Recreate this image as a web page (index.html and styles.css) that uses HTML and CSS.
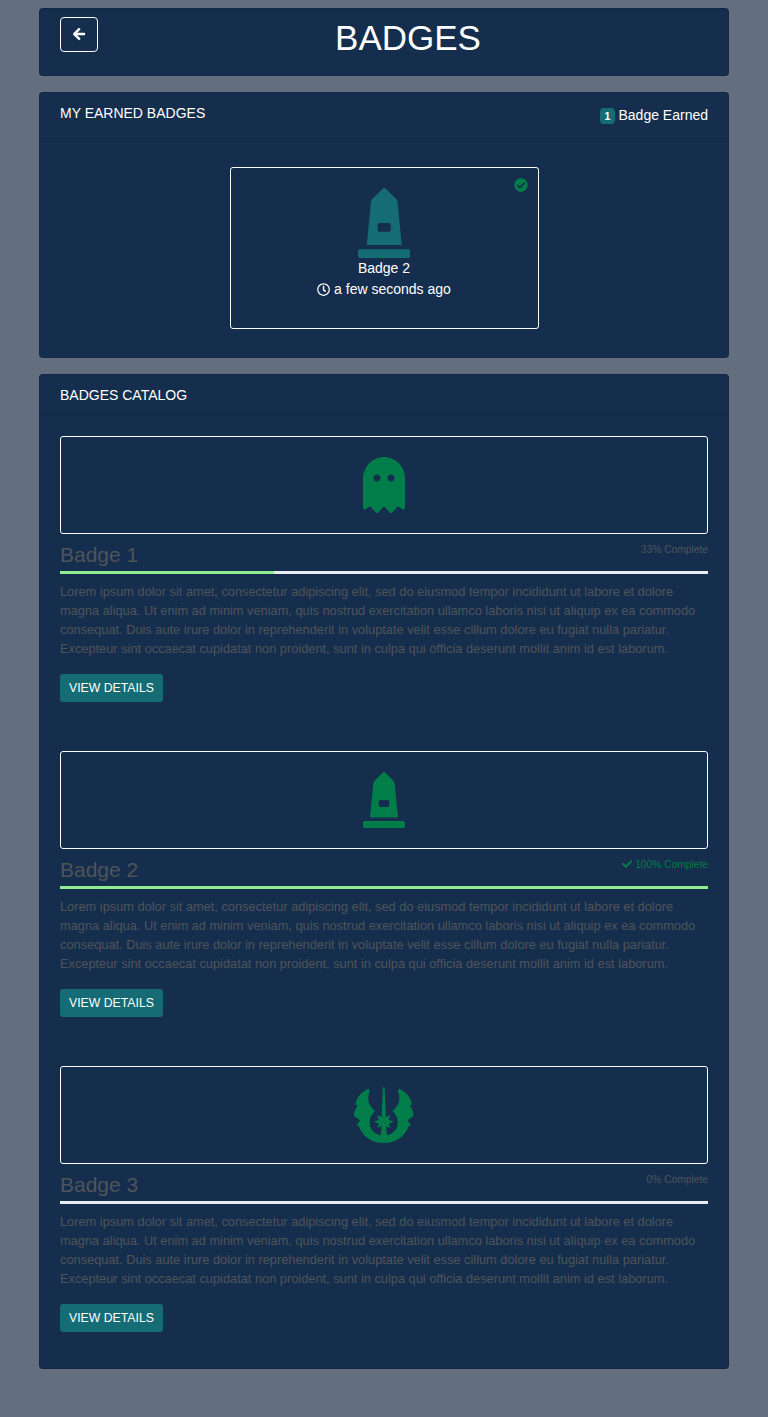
FILE: index.html
```html
<!DOCTYPE html>
<html lang="en">
<head>
<meta charset="utf-8">
<title>Badges</title>
<link rel="stylesheet" href="styles.css">
</head>
<body>
<svg class="sprite" aria-hidden="true">
  <symbol id="arrow-left" viewBox="0 0 448 512"><path d="M257.5 445.1l-22.2 22.2c-9.4 9.4-24.6 9.4-33.9 0L7 273c-9.4-9.4-9.4-24.6 0-33.9L201.4 44.7c9.4-9.4 24.6-9.4 33.9 0l22.2 22.2c9.5 9.5 9.3 25-.4 34.3L136.6 216H424c13.3 0 24 10.7 24 24v32c0 13.3-10.7 24-24 24H136.6l120.5 114.8c9.8 9.3 10 24.8.4 34.3z"/></symbol>
  <symbol id="check-circle" viewBox="0 0 512 512"><path d="M504 256c0 136.967-111.033 248-248 248S8 392.967 8 256 119.033 8 256 8s248 111.033 248 248zM227.314 387.314l184-184c6.248-6.248 6.248-16.379 0-22.627l-22.627-22.627c-6.248-6.249-16.379-6.249-22.628 0L216 308.118l-70.059-70.059c-6.248-6.248-16.379-6.248-22.628 0l-22.627 22.627c-6.248 6.248-6.248 16.379 0 22.627l104 104c6.249 6.249 16.379 6.249 22.628.001z"/></symbol>
  <symbol id="clock" viewBox="0 0 512 512"><path d="M256 8C119 8 8 119 8 256s111 248 248 248 248-111 248-248S393 8 256 8zm0 448c-110.5 0-200-89.5-200-200S145.5 56 256 56s200 89.5 200 200-89.5 200-200 200zm61.8-104.4l-84.9-61.7c-3.1-2.3-4.9-5.9-4.9-9.7V116c0-6.6 5.4-12 12-12h32c6.6 0 12 5.4 12 12v141.7l66.8 48.6c5.4 3.9 6.5 11.4 2.6 16.8L334.6 349c-3.9 5.3-11.4 6.5-16.8 2.6z"/></symbol>
  <symbol id="check" viewBox="0 0 512 512"><path d="M173.898 439.404l-166.4-166.4c-9.997-9.997-9.997-26.206 0-36.204l36.203-36.204c9.997-9.998 26.207-9.998 36.204 0L192 312.69 432.095 72.596c9.997-9.997 26.207-9.997 36.204 0l36.203 36.204c9.997 9.997 9.997 26.206 0 36.204l-294.4 294.401c-9.998 9.997-26.207 9.997-36.204-.001z"/></symbol>
  <symbol id="monument" viewBox="0 0 384 512"><path d="M368 448H16c-8.84 0-16 7.16-16 16v32c0 8.84 7.16 16 16 16h352c8.84 0 16-7.16 16-16v-32c0-8.84-7.16-16-16-16zm-78.86-347.26a31.97 31.97 0 0 0-9.21-19.44L203.31 4.69c-6.25-6.25-16.38-6.25-22.63 0l-76.6 76.61a31.97 31.97 0 0 0-9.21 19.44L64 416h256l-30.86-315.26zM240 307.2c0 6.4-6.4 12.8-12.8 12.8h-70.4c-6.4 0-12.8-6.4-12.8-12.8v-38.4c0-6.4 6.4-12.8 12.8-12.8h70.4c6.4 0 12.8 6.4 12.8 12.8v38.4z"/></symbol>
  <symbol id="ghost" viewBox="0 0 384 512"><path d="M186.1.09C81.01 3.24 0 94.92 0 200.05v263.92c0 14.26 17.23 21.39 27.31 11.31l24.92-18.53c6.66-4.95 16-3.99 21.51 2.21l42.95 48.35c6.25 6.25 16.38 6.25 22.63 0l40.72-45.85c6.37-7.17 17.56-7.17 23.92 0l40.72 45.85c6.25 6.25 16.38 6.25 22.63 0l42.95-48.35c5.51-6.2 14.85-7.17 21.51-2.21l24.92 18.53c10.08 10.08 27.31 2.94 27.31-11.31V192C384 84 294.83-3.17 186.1.09zM128 224c-17.67 0-32-14.33-32-32s14.33-32 32-32 32 14.33 32 32-14.33 32-32 32zm128 0c-17.67 0-32-14.33-32-32s14.33-32 32-32 32 14.33 32 32-14.33 32-32 32z"/></symbol>
  <symbol id="jedi" viewBox="42.75 51 178.5 168"><path d="M132 51Q134.500 51 134.700 54L138.500 141L152 136L147 149L162 155L147 161L152 174L139 169L141 195C164 192 174 174 174 156C174 144 170 136 158 123C180 104 182 88 175 65Q173 56 180 57C200 66 213 82 217 104L210 105L220 124Q222 134 221 139L203 151L213 165Q213 169 207 168C194 203 166 219 132 219S70 203 57 168Q51 169 51 165L61 151L43 139Q42 134 44 124L54 105L47 104C51 82 64 66 84 57Q91 56 89 65C82 88 84 104 106 123C94 136 90 144 90 156C90 174 100 192 123 195L125 169L112 174L117 161L102 155L117 149L112 136L125.500 141L129.300 54Q129.500 51 132 51Z"/></symbol>
</svg>
<main class="container">
  <header class="card title-card">
    <a class="back" href="#" aria-label="Back"><svg class="icon icon-arrow"><use href="#arrow-left"/></svg></a>
    <h1>BADGES</h1>
  </header>

  <section class="card">
    <div class="card-header earned-header">
      <span>MY EARNED BADGES</span>
      <span class="earned-count"><b class="count">1</b> Badge Earned</span>
    </div>
    <div class="earned-body">
      <div class="earned">
        <svg class="icon check-mark"><use href="#check-circle"/></svg>
        <svg class="icon earned-icon"><use href="#monument"/></svg>
        <div>Badge 2</div>
        <div><svg class="icon icon-clock"><use href="#clock"/></svg> a few seconds ago</div>
      </div>
    </div>
  </section>

  <section class="card">
    <div class="card-header">BADGES CATALOG</div>
    <div class="catalog">
      <article class="item">
        <div class="picture"><svg class="icon icon-narrow"><use href="#ghost"/></svg></div>
        <div class="heading"><h2>Badge 1</h2><span class="status">33% Complete</span></div>
        <div class="progress"><div class="bar" style="width:33%"></div></div>
        <p>Lorem ipsum dolor sit amet, consectetur adipiscing elit, sed do eiusmod tempor incididunt ut labore et dolore magna aliqua. Ut enim ad minim veniam, quis nostrud exercitation ullamco laboris nisi ut aliquip ex ea commodo consequat. Duis aute irure dolor in reprehenderit in voluptate velit esse cillum dolore eu fugiat nulla pariatur. Excepteur sint occaecat cupidatat non proident, sunt in culpa qui officia deserunt mollit anim id est laborum.</p>
        <a class="details" href="#">VIEW DETAILS</a>
      </article>
      <article class="item">
        <div class="picture"><svg class="icon icon-narrow"><use href="#monument"/></svg></div>
        <div class="heading"><h2>Badge 2</h2><span class="status done"><svg class="icon icon-check"><use href="#check"/></svg> 100% Complete</span></div>
        <div class="progress"><div class="bar" style="width:100%"></div></div>
        <p>Lorem ipsum dolor sit amet, consectetur adipiscing elit, sed do eiusmod tempor incididunt ut labore et dolore magna aliqua. Ut enim ad minim veniam, quis nostrud exercitation ullamco laboris nisi ut aliquip ex ea commodo consequat. Duis aute irure dolor in reprehenderit in voluptate velit esse cillum dolore eu fugiat nulla pariatur. Excepteur sint occaecat cupidatat non proident, sunt in culpa qui officia deserunt mollit anim id est laborum.</p>
        <a class="details" href="#">VIEW DETAILS</a>
      </article>
      <article class="item">
        <div class="picture"><svg class="icon icon-wide"><use href="#jedi"/></svg></div>
        <div class="heading"><h2>Badge 3</h2><span class="status">0% Complete</span></div>
        <div class="progress"><div class="bar" style="width:0%"></div></div>
        <p>Lorem ipsum dolor sit amet, consectetur adipiscing elit, sed do eiusmod tempor incididunt ut labore et dolore magna aliqua. Ut enim ad minim veniam, quis nostrud exercitation ullamco laboris nisi ut aliquip ex ea commodo consequat. Duis aute irure dolor in reprehenderit in voluptate velit esse cillum dolore eu fugiat nulla pariatur. Excepteur sint occaecat cupidatat non proident, sunt in culpa qui officia deserunt mollit anim id est laborum.</p>
        <a class="details" href="#">VIEW DETAILS</a>
      </article>
    </div>
  </section>
</main>
</body>
</html>
```
FILE: styles.css
```css
* { box-sizing: border-box; }
body {
  margin: 0;
  min-height: 1417px;
  background: #636f7e;
  color: #fff;
  font: 14px/21px "Liberation Sans", Arial, sans-serif;
}
a { color: inherit; text-decoration: none; }
h1, h2, p { margin: 0; font-weight: 400; }
.sprite { position: absolute; width: 0; height: 0; }
.icon { fill: currentColor; }
.container {
  width: 690px;
  margin: 0 auto;
  padding-top: 8px;
  display: flex;
  flex-direction: column;
  gap: 16px;
}
.card {
  background: #162e4d;
  border: 1px solid rgba(0, 0, 0, .125);
  border-radius: 4px;
}
.title-card {
  display: flex;
  align-items: flex-start;
  gap: 9.75px;
  height: 68px;
  padding: 8px 20px;
}
.back {
  display: flex;
  padding: 9px 12px 10px;
  height: 35px;
  border: 1px solid #fff;
  border-radius: 4px;
}
.icon-arrow { width: 12.25px; height: 14px; stroke: currentColor; stroke-width: 16px; overflow: visible; }
h1 { flex: 1; font-size: 35px; line-height: 42px; text-align: center; }
.card-header {
  padding: 10px 20px 9px;
  border-bottom: 1px solid rgba(0, 0, 0, .125);
}
.earned-header { display: flex; justify-content: space-between; height: 46px; }
.earned-count { padding-top: 2px; }
.count {
  display: inline-block;
  padding: 3px 4.2px 2.5px;
  border-radius: 4px;
  background: #156c74;
  font-size: 10.5px;
  line-height: 10.5px;
  vertical-align: 0;
}
.earned-body { display: flex; justify-content: center; padding: 28px 0; }
.earned {
  position: relative;
  width: 309px;
  height: 162px;
  padding-top: 19.5px;
  border: 1px solid #fff;
  border-radius: 3px;
  text-align: center;
}
.earned-icon { display: block; width: 52.5px; height: 70px; margin: 0 auto .5px; color: #156c74; }
.check-mark { position: absolute; top: 9.5px; right: 10px; width: 14px; height: 14px; color: #007d48; }
.icon-clock { width: 13.1px; height: 13.1px; vertical-align: -1.7px; }
.catalog { padding: 20px 20px 36px; display: flex; flex-direction: column; gap: 49px; }
.item { height: 266px; }
.picture {
  display: flex;
  justify-content: center;
  padding: 20px;
  border: 1px solid #fff;
  border-radius: 3px;
  color: #007d48;
}
.icon-narrow { width: 42px; height: 56px; }
.icon-wide { width: 59.5px; height: 56px; }
.heading { display: flex; justify-content: space-between; height: 37px; padding-top: 8px; color: #4f5459; }
h2 { font-size: 21px; line-height: 25px; }
.status { font-size: 10.24px; line-height: 15px; }
.done { color: #007d48; }
.icon-check { width: 10.24px; height: 10.24px; vertical-align: -1.3px; }
.progress { height: 3px; background: #e9ecef; }
.bar { height: 3px; background: #90ee90; }
p { margin: 8px 0 16px; font-size: 12.8px; line-height: 19px; color: #4f5459; }
.details {
  display: inline-block;
  height: 28px;
  padding: 5px 9px;
  border-radius: 3px;
  background: #156c74;
  font-size: 12.25px;
  line-height: 18px;
}
```
